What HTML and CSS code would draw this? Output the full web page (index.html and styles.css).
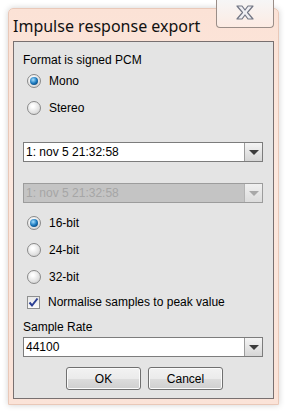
FILE: index.html
```html
<!DOCTYPE html>
<html lang="en">
<head>
    <meta charset="UTF-8">
    <title>Impulse response export</title>
    <link rel="stylesheet" href="styles.css">
</head>
<body>
    <div class="window">
        <div class="titlebar">
            <span class="title">Impulse response export</span>
            <div class="close-btn">
                <svg width="24" height="15" viewBox="0 0 24 15">
                    <path d="M4 1 H9 L12 5 L15 1 H20 L14.5 7.5 L20 14 H15 L12 10 L9 14 H4 L9.5 7.5 Z" fill="#eeeef2" stroke="#727684" stroke-width="1.2" stroke-linejoin="round"/>
                </svg>
            </div>
        </div>
        <div class="panel">
            <div class="label first">Format is signed PCM</div>

            <div class="option"><span class="radio checked"></span>Mono</div>
            <div class="option"><span class="radio"></span>Stereo</div>

            <div class="combo combo-1">
                <span class="combo-text">1: nov 5 21:32:58</span>
                <span class="combo-btn"><span class="arrow"></span></span>
            </div>

            <div class="combo combo-2 disabled">
                <span class="combo-text">1: nov 5 21:32:58</span>
                <span class="combo-btn"><span class="arrow"></span></span>
            </div>

            <div class="bits">
                <div class="option"><span class="radio checked"></span>16-bit</div>
                <div class="option"><span class="radio"></span>24-bit</div>
                <div class="option"><span class="radio"></span>32-bit</div>
                <div class="option check-row">
                    <span class="checkbox">
                        <svg width="11" height="11" viewBox="0 0 11 11">
                            <path d="M1.5 5.5 L4 8.5 L9.5 1.5" fill="none" stroke="#2b3f94" stroke-width="2"/>
                        </svg>
                    </span>
                    Normalise samples to peak value
                </div>
            </div>

            <div class="label rate">Sample Rate</div>
            <div class="combo combo-3">
                <span class="combo-text">44100</span>
                <span class="combo-btn"><span class="arrow"></span></span>
            </div>

            <div class="buttons">
                <button>OK</button>
                <button>Cancel</button>
            </div>
        </div>
    </div>
</body>
</html>
```

FILE: styles.css
```css
body {
    margin: 0;
    width: 285px;
    height: 413px;
    background-color: #fff;
    font-family: 'Liberation Sans', Arial, sans-serif;
    font-size: 12px;
    color: #000;
    overflow: hidden;
}
.window {
    position: relative;
    margin: 8px 0 0 8px;
    width: 271px;
    height: 397px;
    box-sizing: border-box;
    padding: 0 4px 5px 4px;
    background: linear-gradient(to bottom, #fbe2d6, #fde8de 40%, #fbe3d8);
    border: 1px solid #e9c8b8;
    border-radius: 5px 5px 0 0;
    box-shadow: 0 0 6px rgba(0, 0, 0, 0.18);
    display: flex;
    flex-direction: column;
}
.titlebar {
    height: 32px;
    flex-shrink: 0;
    display: flex;
    align-items: center;
}
.title {
    font-family: 'Noto Sans', sans-serif;
    font-size: 16px;
    color: #111;
    margin-top: 2px;
}
.close-btn {
    position: absolute;
    top: -9px;
    right: 4px;
    width: 58px;
    height: 28px;
    box-sizing: border-box;
    border: 1px solid #9a8e88;
    border-top: none;
    border-radius: 0 0 4px 4px;
    background: linear-gradient(to bottom, #f6f6f6, #fcebe3);
    display: flex;
    justify-content: center;
    align-items: center;
    padding-bottom: 3px;
}
.panel {
    flex: 1;
    background-color: #e4e4e4;
    border: 1px solid #787070;
    padding: 0 10px 0 9px;
    display: flex;
    flex-direction: column;
}
.label {
    height: 14px;
    line-height: 14px;
}
.label.first {
    margin-top: 11px;
}
.label.rate {
    margin-top: 6px;
}
.option {
    height: 27px;
    display: flex;
    align-items: center;
    padding-left: 4px;
}
.radio {
    width: 14px;
    height: 14px;
    border-radius: 50%;
    box-sizing: border-box;
    border: 1px solid #8a8a8a;
    background: radial-gradient(circle at 40% 35%, #ffffff 10%, #e2e2e2 60%, #c4c4c4);
    margin-right: 8px;
    position: relative;
    flex-shrink: 0;
}
.radio.checked::after {
    content: '';
    position: absolute;
    left: 2px;
    top: 2px;
    width: 8px;
    height: 8px;
    border-radius: 50%;
    background: radial-gradient(circle at 40% 35%, #a6e0ff, #1a78bd 50%, #062c55);
}
.combo {
    height: 20px;
    box-sizing: border-box;
    border: 1px solid #7c7c7c;
    background-color: #fff;
    display: flex;
}
.combo-1 {
    margin-top: 21px;
}
.combo-2 {
    margin-top: 21px;
}
.combo-3 {
    margin-top: 3px;
}
.combo-text {
    flex: 1;
    padding-left: 2px;
    line-height: 18px;
}
.combo-btn {
    width: 17px;
    border-left: 1px solid #9c9c9c;
    background: linear-gradient(to bottom, #f4f4f4, #d6d6d6);
    display: flex;
    justify-content: center;
    align-items: center;
}
.arrow {
    width: 0;
    height: 0;
    border-left: 5px solid transparent;
    border-right: 5px solid transparent;
    border-top: 5px solid #3c3c3c;
}
.combo.disabled {
    background-color: #c4c4c4;
    border-color: #9c9c9c;
}
.combo.disabled .combo-text {
    color: #a6a6a6;
}
.combo.disabled .combo-btn {
    border-left-color: #b4b4b4;
    background: linear-gradient(to bottom, #f0f0f0, #dcdcdc);
}
.combo.disabled .arrow {
    border-top-color: #a8a8a8;
}
.bits {
    margin-top: 6px;
}
.check-row {
    height: 24px;
}
.checkbox {
    width: 13px;
    height: 13px;
    box-sizing: border-box;
    border: 1px solid #8e8f8f;
    background: linear-gradient(to bottom, #e8e8e8, #fafafa);
    margin-right: 8px;
    display: flex;
    justify-content: center;
    align-items: center;
}
.buttons {
    margin-top: 10px;
    display: flex;
    justify-content: center;
    gap: 7px;
    padding-left: 3px;
}
button {
    width: 75px;
    height: 23px;
    font-family: 'Liberation Sans', Arial, sans-serif;
    font-size: 12px;
    color: #000;
    border: 1px solid #707070;
    border-radius: 3px;
    background: linear-gradient(to bottom, #f2f2f2, #ebebeb 50%, #dddddd 51%, #cfcfcf);
    box-shadow: inset 0 0 0 1px #fbfbfb;
    padding: 0;
}
```
